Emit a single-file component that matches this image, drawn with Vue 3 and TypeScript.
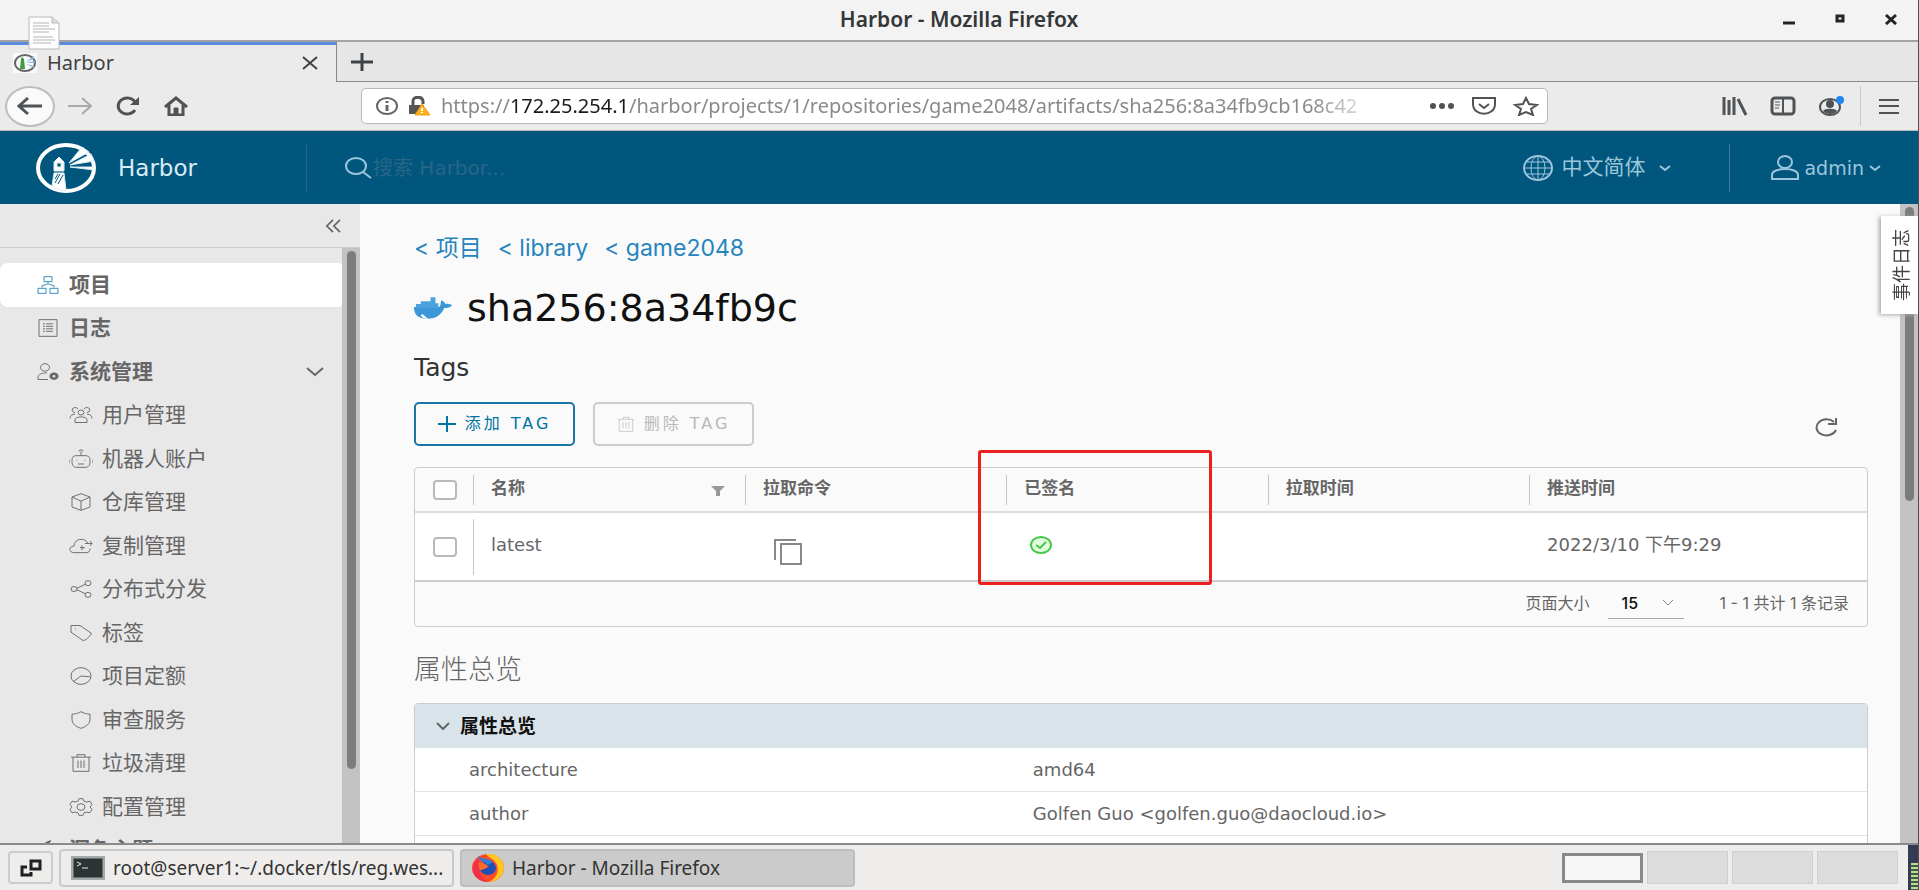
<script setup lang="ts">
import { ref } from 'vue'

interface MenuItem {
  label: string
  icon: string
}

const topMenu: MenuItem[] = [
  { label: '项目', icon: 'M8 2h8v6H8zM2 16h8v6H2zM14 16h8v6h-8zM12 8v4M6 15v-2l5-2M18 15v-2l-5-2' },
  { label: '日志', icon: 'M3 2h18v20H3zM7 7h2M10 7h7M7 10h2M10 10h7M7 13h2M10 13h7M7 16h2M10 16h7' },
]

const adminMenu: MenuItem[] = [
  { label: '用户管理', icon: 'M12 12a3 3 0 1 0 0-6 3 3 0 0 0 0 6zM6 21v-3c0-5 12-5 12 0v3zM9 5a3 3 0 1 0-3 4M15 5a3 3 0 1 1 3 4M1 16c0-3 2-5 5-5M23 16c0-3-2-5-5-5' },
  { label: '机器人账户', icon: 'M8 8h8c5 0 5 3 5 7s-1 7-5 7H8c-4 0-5-3-5-7s0-7 5-7zM12 8V3M10 3a2 2 0 1 1 4 0M8 13v1M16 13v1M9 18h6M0 13v4M24 13v4' },
  { label: '仓库管理', icon: 'M12 2l9 4v12l-9 4-9-4V6zM3 6l9 5 9-5M12 11v11' },
  { label: '复制管理', icon: 'M21 15c0 3-1 5-4 5H5c-5 0-6-7 0-8 0-9 11-11 14-3M11 14h5M13 11v6M16 9h7M21 6l2 3-2 3' },
  { label: '分布式分发', icon: 'M5 15a3 3 0 1 0 0-6 3 3 0 0 0 0 6zM19 8a3 3 0 1 0 0-6 3 3 0 0 0 0 6zM19 22a3 3 0 1 0 0-6 3 3 0 0 0 0 6zM8 11l9-5M8 13l9 5' },
  { label: '标签', icon: 'M2 3v8l12 10 3-1 5-6v-2L11 3zM6 7h1' },
  { label: '项目定额', icon: 'M12 22a10 10 0 1 0 0-20 10 10 0 0 0 0 20zM4 19l8-7 9 1' },
  { label: '审查服务', icon: 'M12 2c3 2 6 3 9 3v6c0 6-4 9-9 11-5-2-9-5-9-11V5c3 0 6-1 9-3z' },
  { label: '垃圾清理', icon: 'M2 5h20M4 5v17h16V5M8 5V2h8v3M9 9v9M12 9v9M15 9v9' },
  { label: '配置管理', icon: 'M10 2h4l1 3 3 1 3-1 2 4-2 3 2 3-2 4-3-1-3 1-1 3h-4l-1-3-3-1-3 1-2-4 2-3-2-3 2-4 3 1 3-1zM12 16a4 4 0 1 0 0-8 4 4 0 0 0 0 8z' },
]

const crumbs = ['项目', 'library', 'game2048']

const overview = [
  { name: 'architecture', value: 'amd64' },
  { name: 'author', value: 'Golfen Guo <golfen.guo@daocloud.io>' },
]

const search = ref('')
const pageSize = ref('15')
const allChecked = ref(false)
const rowChecked = ref(false)
const overviewOpen = ref(true)
</script>

<template>
  <div class="screen">
    <header class="titlebar">
      <span class="window-title">Harbor - Mozilla Firefox</span>
      <div class="window-buttons">
        <button aria-label="Minimize"><svg viewBox="0 0 14 12"><path d="M1 10h12" stroke-width="3" /></svg></button>
        <button aria-label="Maximize"><svg viewBox="0 0 14 12"><path d="M4 3h6v5H4z" stroke-width="3" /></svg></button>
        <button aria-label="Close"><svg viewBox="0 0 14 12"><path d="M2 2l10 9M12 2L2 11" stroke-width="3" /></svg></button>
      </div>
      <svg class="desktop-file" viewBox="0 0 32 34" aria-hidden="true">
        <path d="M1 1h23l7 6v26H1z" fill="#fdfdfd" stroke="#bbb" />
        <path d="M24 1v6h7" fill="#ddd" stroke="#bbb" />
        <path d="M5 7h16M5 10h16M5 13h22M5 16h16M5 21h20M5 24h22M5 27h18" stroke="#b5b5b5" />
      </svg>
    </header>

    <div class="tabstrip">
      <div class="tab">
        <svg class="favicon" viewBox="0 0 24 20" aria-hidden="true">
          <path d="M0 0h24v20H0z" fill="#fafafa" />
          <ellipse cx="12" cy="10" rx="10" ry="8" fill="none" stroke="#666" stroke-width="2" />
          <path d="M9 4l2 2 1 10H7l1-10z" fill="#3f9b3f" />
          <path d="M13 9l8-6v3zM13 10l9-2v2zM13 11l8 2v2z" fill="#7fb4dd" />
        </svg>
        <span class="tab-title">Harbor</span>
        <button class="tab-close" aria-label="Close tab"><svg viewBox="0 0 18 14"><path d="M2 1l14 12M16 1L2 13" stroke-width="2" /></svg></button>
      </div>
      <button class="new-tab" aria-label="New tab"><svg viewBox="0 0 22 18"><path d="M0 9h22M11 0v18" stroke-width="3" /></svg></button>
    </div>

    <div class="toolbar">
      <div class="nav-buttons">
        <button class="back" aria-label="Back"><svg viewBox="0 0 26 20"><path d="M25 10H3M11 2l-9 8 9 8" stroke-width="3" /></svg></button>
        <button class="forward" aria-label="Forward"><svg viewBox="0 0 26 20"><path d="M1 10h22M15 2l9 8-9 8" stroke-width="2" /></svg></button>
        <button aria-label="Reload"><svg viewBox="0 0 26 20"><path d="M20 14a9 8 0 1 1 0-8" stroke-width="3" /><path d="M24 1v8h-9z" fill="currentColor" stroke="none" /></svg></button>
        <button aria-label="Home"><svg viewBox="0 0 26 20"><path d="M2 11L13 2l11 9M6 9v10h14V9" stroke-width="3" /><path d="M11 12h4v7h-4z" fill="currentColor" /></svg></button>
      </div>
      <div class="urlbar">
        <svg class="url-icon" viewBox="0 0 24 20"><ellipse cx="12" cy="10" rx="10" ry="8" stroke-width="2" /><path d="M12 9v6M12 5v2" stroke-width="3" /></svg>
        <svg class="url-icon lock" viewBox="0 0 24 20"><path d="M6 9V5c0-5 9-5 10 0v3" stroke-width="3" /><path d="M2 9h15v9H2z" fill="currentColor" stroke="none" /><path d="M15 8l8 11H8z" fill="#ffb01f" stroke="#f0a010" /><path d="M15 12v3M15 16v1" stroke="#fff" stroke-width="2" /></svg>
        <div class="url-text" role="textbox" aria-label="Address">https://<b>172.25.254.1</b>/harbor/projects/1/repositories/game2048/artifacts/sha256:8a34fb9cb168c42</div>
        <div class="url-actions">
          <button aria-label="Page actions"><svg viewBox="0 0 26 20"><g fill="currentColor" stroke="none"><circle cx="4" cy="10" r="3" /><circle cx="13" cy="10" r="3" /><circle cx="22" cy="10" r="3" /></g></svg></button>
          <button aria-label="Save to Pocket"><svg viewBox="0 0 26 20"><path d="M2 2h22v6c0 13-22 13-22 0zM8 8l5 4 5-4" stroke-width="2" /></svg></button>
          <button aria-label="Bookmark"><svg viewBox="0 0 26 20"><path d="M13 2l3 6 8 1-6 4 2 6-7-3-7 3 2-6-6-4 8-1z" stroke-width="2" /></svg></button>
        </div>
      </div>
      <div class="tool-buttons">
        <button aria-label="Library"><svg viewBox="0 0 26 20"><path d="M2 1v18M7 4v15M12 1v18M16 3l8 16" stroke-width="3" /></svg></button>
        <button aria-label="Sidebars"><svg viewBox="0 0 26 20"><rect x="2" y="2" width="22" height="16" rx="3" stroke-width="3" /><path d="M13 2v16" stroke-width="2" /><path d="M5 6h5M5 9h5M5 12h4" /></svg></button>
        <button aria-label="Account"><svg viewBox="0 0 26 20"><ellipse cx="12" cy="11" rx="10" ry="8" stroke-width="2" /><ellipse cx="12" cy="8" rx="4" ry="4" fill="currentColor" stroke="none" /><path d="M5 15c1-3 13-3 14 0-3 4-11 4-14 0z" fill="currentColor" stroke="none" /><circle cx="22" cy="4" r="4" fill="#2187f0" stroke="none" /></svg></button>
        <button class="menu-button" aria-label="Open menu"><svg viewBox="0 0 26 20"><path d="M3 4h20M3 10h20M3 17h20" stroke-width="2" /></svg></button>
      </div>
    </div>

    <div class="harbor-header">
      <a class="brand" href="#">
        <svg class="logo" viewBox="0 0 60 50" aria-hidden="true">
          <ellipse cx="30" cy="25" rx="28" ry="23" fill="none" stroke="#fff" stroke-width="4" />
          <path d="M33 20L46 4l7 5zM34 22l21-11 3 7zM34 24h24v3z" fill="#fff" />
          <path d="M18 19l5-5 5 5v9H18z" fill="#fff" />
          <path d="M21 20h4v4h-4z" fill="#00567d" />
          <path d="M18 30h10l2 17c-6 1-11-1-14-4z" fill="#fff" />
          <path d="M19 40l5-9M22 41l5-9M19 36l3-5" stroke="#00567d" />
        </svg>
        <span>Harbor</span>
      </a>
      <label class="search">
        <svg viewBox="0 0 30 24" aria-hidden="true"><ellipse cx="13" cy="10" rx="10" ry="8" stroke-width="2" /><path d="M20 16l8 6" stroke-width="2" /></svg>
        <input v-model="search" type="text" placeholder="搜索 Harbor..." aria-label="搜索" />
      </label>
      <button class="language">
        <svg class="globe" viewBox="0 0 30 26"><ellipse cx="15" cy="13" rx="14" ry="12" stroke-width="2" /><ellipse cx="15" cy="13" rx="7" ry="12" /><path d="M15 1v24M1 13h28M4 7h22M4 19h22" /></svg>
        <span>中文简体</span>
        <svg class="caret" viewBox="0 0 12 8"><path d="M1 2l5 4 5-4" stroke-width="2" /></svg>
      </button>
      <button class="account">
        <svg class="person" viewBox="0 0 30 26"><ellipse cx="15" cy="7" rx="7" ry="6" stroke-width="2" /><path d="M2 24v-4c0-8 26-8 26 0v4z" stroke-width="2" /></svg>
        <span>admin</span>
        <svg class="caret" viewBox="0 0 12 8"><path d="M1 2l5 4 5-4" stroke-width="2" /></svg>
      </button>
    </div>

    <div class="body">
      <aside class="sidebar">
        <div class="collapse">
          <button aria-label="收起"><svg viewBox="0 0 18 16"><path d="M9 1L2 8l7 7M17 1l-7 7 7 7" stroke-width="2" /></svg></button>
        </div>
        <div class="side-scroll">
          <nav>
            <a v-for="(item, i) in topMenu" :key="item.label" href="#" class="item top" :class="{ active: i === 0 }">
              <svg viewBox="0 0 24 24" preserveAspectRatio="none"><path :d="item.icon" /></svg><span>{{ item.label }}</span>
            </a>
            <button class="item top group">
              <svg viewBox="0 0 24 24" preserveAspectRatio="none"><path d="M9 11a4 4 0 1 0 0-9 4 4 0 0 0 0 9zM12 21H2v-3c0-3 4-5 9-5" /><path d="M18 20a3 3 0 1 0 0-6 3 3 0 0 0 0 6z" stroke-width="3" /></svg>
              <span>系统管理</span>
              <svg class="group-caret" viewBox="0 0 18 10"><path d="M1 1l8 7 8-7" stroke-width="2" /></svg>
            </button>
            <a v-for="item in adminMenu" :key="item.label" href="#" class="item sub">
              <svg viewBox="0 0 24 24" preserveAspectRatio="none"><path :d="item.icon" /></svg><span>{{ item.label }}</span>
            </a>
            <button class="item top">
              <svg viewBox="0 0 24 24" preserveAspectRatio="none"><path d="M15 1C4 3 2 17 12 21c4 1 7 0 10-3-9 1-14-10-7-17z" fill="currentColor" /></svg><span>深色主题</span>
            </button>
          </nav>
          <div class="rail"><div class="thumb side-thumb"></div></div>
        </div>
      </aside>

      <main>
        <div class="crumbs">
          <a v-for="c in crumbs" :key="c" href="#">&lt; {{ c }}</a>
        </div>
        <h1>
          <svg viewBox="0 0 40 24" aria-hidden="true">
            <path d="M0 11h26c2-2 1-5 2-7 3 1 4 3 4 4 2-1 5 0 7 1-2 3-5 3-8 3-4 9-11 11-17 11C4 23 0 19 0 11z" fill="#3c97d8" />
            <path d="M2 8h5v4H2zM7 5h11v7H7zM17 1h5v11h-5zM22 7h3v5h-3z" fill="#4ba2df" />
            <path d="M8 21c-2-2-1-3 2-2 1 2 3 3 5 4-3 0-5 0-7-2z" fill="#fff" />
          </svg>
          sha256:8a34fb9c
        </h1>
        <h2>Tags</h2>
        <div class="actions">
          <button class="btn">
            <svg viewBox="0 0 18 16"><path d="M0 8h18M9 0v16" stroke-width="2" /></svg>添加 TAG
          </button>
          <button class="btn" disabled>
            <svg viewBox="0 0 24 24" preserveAspectRatio="none"><path d="M1 5h22M3 5v18h18V5M8 5V2h8v3M8 9v10M12 9v10M16 9v10" /></svg>删除 TAG
          </button>
          <button class="refresh" aria-label="刷新"><svg viewBox="0 0 24 20"><path d="M22 13A10 8 0 1 1 20 5M22 1v6h-8" stroke-width="2" /></svg></button>
        </div>

        <section class="datagrid">
          <table>
            <colgroup>
              <col class="c-check" />
              <col class="c-name" />
              <col class="c-col" />
              <col class="c-col" />
              <col class="c-col" />
              <col />
            </colgroup>
            <thead>
              <tr>
                <th><input v-model="allChecked" type="checkbox" aria-label="全选" /></th>
                <th>
                  <div class="cell">名称<button class="filter" aria-label="筛选"><svg viewBox="0 0 14 12"><path d="M0 1h14L9 6v5H5V6z" fill="currentColor" stroke="none" /></svg></button></div>
                </th>
                <th><div class="cell">拉取命令</div></th>
                <th class="signed"><div class="cell">已签名</div><span class="highlight"></span></th>
                <th><div class="cell">拉取时间</div></th>
                <th><div class="cell">推送时间</div></th>
              </tr>
            </thead>
            <tbody>
              <tr>
                <td><input v-model="rowChecked" type="checkbox" aria-label="latest" /></td>
                <td><div class="cell tall">latest</div></td>
                <td>
                  <div class="cell plain icon-copy"><button aria-label="复制"><svg viewBox="0 0 28 28"><path d="M1 22V2h21M7 6h20v20H7z" stroke-width="2" /></svg></button></div>
                </td>
                <td>
                  <div class="cell plain icon-ok"><svg viewBox="0 0 22 18" role="img" aria-label="已签名"><ellipse cx="11" cy="9" rx="10" ry="8" fill="#e2fbdf" stroke="#45c748" stroke-width="2" /><path d="M6 9l4 3 6-6" stroke="#45c748" stroke-width="2" /></svg></div>
                </td>
                <td></td>
                <td><div class="cell plain">2022/3/10 下午9:29</div></td>
              </tr>
            </tbody>
          </table>
          <footer>
            <label for="page-size">页面大小</label>
            <div class="select">
              <select id="page-size" v-model="pageSize">
                <option>15</option>
                <option>25</option>
                <option>50</option>
              </select>
              <svg viewBox="0 0 12 8"><path d="M1 1l5 5 5-5" /></svg>
            </div>
            <span>1 - 1 共计 1 条记录</span>
          </footer>
        </section>

        <h3>属性总览</h3>
        <section class="overview">
          <button class="overview-head" :aria-expanded="overviewOpen" @click="overviewOpen = !overviewOpen">
            <svg viewBox="0 0 14 10"><path d="M1 2l6 6 6-6" stroke-width="2" /></svg>属性总览
          </button>
          <dl v-if="overviewOpen">
            <div v-for="row in overview" :key="row.name">
              <dt>{{ row.name }}</dt>
              <dd>{{ row.value }}</dd>
            </div>
            <div></div>
          </dl>
        </section>
      </main>
      <div class="rail page-rail"><div class="thumb page-thumb"></div></div>
      <button class="event-log"><span>事件日志</span></button>
    </div>

    <footer class="taskbar">
      <button class="show-desktop" aria-label="Show desktop"><svg viewBox="0 0 22 18"><path d="M11 2h9v8h-9zM7 8H2v8h9v-3" stroke-width="3" /></svg></button>
      <button class="task">
        <svg class="terminal" viewBox="0 0 34 24"><path d="M1 1h32v22H1z" fill="#2c3434" stroke="#a5a9a9" stroke-width="3" /><path d="M6 6l4 2-4 2M11 12h6" stroke="#e8e8e8" /></svg>
        root@server1:~/.docker/tls/reg.wes...
      </button>
      <button class="task current">
        <svg class="firefox" viewBox="0 0 32 28">
          <ellipse cx="16" cy="14" rx="16" ry="14" fill="#ff4a2c" />
          <path d="M14 0c10-2 18 6 18 14S24 28 16 28c9-3 12-12 8-19-3-5-7-5-10-9z" fill="#ffc81e" />
          <path d="M6 4C2 8-1 15 2 20c3 5 8 8 14 8C8 24 6 16 9 10z" fill="#f0304a" />
          <ellipse cx="16" cy="14" rx="8" ry="7" fill="#1f4fb4" />
          <path d="M6 2c2 3 12 2 15 6l-5 3c-3-3-10-4-10-9z" fill="#2f7fd8" />
          <path d="M6 9c5-1 8 1 11 4-3 0-4 3-9 3z" fill="#ff6a26" />
        </svg>
        Harbor - Mozilla Firefox
      </button>
      <div class="pager">
        <button class="on" aria-label="Workspace 1"></button>
        <button aria-label="Workspace 2"></button>
        <button aria-label="Workspace 3"></button>
        <button aria-label="Workspace 4"></button>
      </div>
      <div class="tray"><span></span></div>
    </footer>
  </div>
</template>

<style>
body {
  margin: 0;
  overflow: hidden;
}
</style>

<style scoped>
* {
  box-sizing: border-box;
}
.screen {
  height: 100vh;
  display: flex;
  flex-direction: column;
  font-family: "DejaVu Sans", "Noto Sans CJK SC", sans-serif;
  color: #666;
  border-right: 1px solid #4a4f52;
  overflow: hidden;
}
button {
  font: inherit;
  color: inherit;
  background: none;
  border: 0;
  padding: 0;
  display: flex;
  align-items: center;
}
a {
  color: inherit;
  text-decoration: none;
}
svg {
  fill: none;
  stroke: currentColor;
  flex: none;
  display: block;
}

.titlebar {
  position: relative;
  height: 42px;
  flex: none;
  display: flex;
  justify-content: center;
  background: #f3f3f3;
  border-bottom: 2px solid #a3a3a3;
  font: 600 21px "Noto Sans", sans-serif;
  color: #333738;
}
.window-title {
  line-height: 38px;
}
.window-buttons {
  position: absolute;
  right: 20px;
  top: 13px;
  display: flex;
  gap: 37px;
  color: #1f2324;
}
.window-buttons svg {
  width: 14px;
  height: 12px;
}
.desktop-file {
  position: absolute;
  z-index: 2;
  left: 28px;
  top: 16px;
  width: 32px;
  height: 34px;
}
.tabstrip {
  height: 40px;
  flex: none;
  display: flex;
  background: #e6e6e6;
  font: 20px "Noto Sans", sans-serif;
  color: #3f4244;
}
.tab {
  width: 337px;
  display: flex;
  align-items: center;
  padding: 0 17px 2px 13px;
  background: #ebebeb;
  border-top: 3px solid #5a8cdb;
  border-right: 1px solid #888;
}
.favicon {
  width: 24px;
  height: 20px;
  stroke: none;
  margin-right: 10px;
}
.tab-title {
  flex: 1;
}
.tab-close svg {
  width: 18px;
  height: 14px;
}
.new-tab {
  flex: 1;
  padding-left: 14px;
  border-bottom: 1px solid #888;
}
.new-tab svg {
  width: 22px;
  height: 18px;
}
.toolbar {
  height: 49px;
  flex: none;
  display: flex;
  align-items: center;
  background: #ebebeb;
  border-bottom: 1px solid #bbb;
  color: #505355;
}
.nav-buttons {
  width: 361px;
  display: flex;
  align-items: center;
  gap: 22px;
  padding-left: 5px;
}
.toolbar button svg {
  width: 26px;
  height: 20px;
}
.toolbar .back {
  width: 50px;
  height: 41px;
  justify-content: center;
  border: 2px solid #bdbdbd;
  border-radius: 50%;
  background: #fafafa;
}
.toolbar .forward {
  margin-left: -10px;
  color: #a9a9a9;
}
.urlbar {
  flex: 1;
  min-width: 0;
  height: 36px;
  display: flex;
  align-items: center;
  background: #fff;
  border: 1px solid #b9b9b9;
  border-radius: 5px;
  padding: 0 8px 0 13px;
}
.url-icon {
  width: 24px;
  height: 20px;
  margin-right: 8px;
  color: #666;
}
.lock {
  margin-right: 10px;
  color: #555;
}
.url-text {
  flex: 1;
  min-width: 0;
  overflow: hidden;
  white-space: nowrap;
  font: 20px/28px "Noto Sans", sans-serif;
  color: #8a8a8a;
  mask-image: linear-gradient(to right, #000 870px, transparent 940px);
}
.url-text b {
  font-weight: 400;
  color: #1a1a1a;
}
.url-actions {
  display: flex;
  gap: 16px;
}
.tool-buttons {
  display: flex;
  align-items: center;
  gap: 22px;
  padding-left: 174px;
  padding-right: 16px;
}
.menu-button {
  height: 40px;
  padding-left: 15px;
  border-left: 1px solid #c8c8c8;
  margin-left: -6px;
}

.harbor-header {
  height: 73px;
  flex: none;
  display: flex;
  align-items: center;
  background: #00567d;
  color: #9cc6dc;
  font-size: 19px;
}
.brand {
  width: 307px;
  height: 48px;
  padding-left: 36px;
  display: flex;
  align-items: center;
  gap: 22px;
  border-right: 1px solid #20698b;
  color: #d9ecf5;
  font-size: 23px;
}
.logo {
  width: 60px;
  height: 50px;
}
.search {
  flex: 1;
  display: flex;
  align-items: center;
  padding-left: 36px;
}
.search svg {
  width: 30px;
  height: 24px;
}
.search input {
  width: 400px;
  font: inherit;
  font-size: 20px;
  color: #d9ecf5;
  background: none;
  border: 0;
  padding: 0;
}
.search input::placeholder {
  color: #296587;
  opacity: 1;
}
.language {
  height: 48px;
  padding-right: 58px;
  border-right: 1px solid #3f7b9b;
  font-size: 21px;
  line-height: 24px;
}
.language span {
  padding-bottom: 2px;
}
.globe,
.person {
  width: 30px;
  height: 26px;
}
.globe {
  margin-right: 8px;
}
.person {
  margin-right: 4px;
}
.caret {
  width: 12px;
  height: 8px;
}
.language .caret {
  margin-left: 14px;
}
.account {
  padding-left: 40px;
  padding-right: 37px;
}
.account .caret {
  margin-left: 5px;
}

.body {
  position: relative;
  flex: 1;
  min-height: 0;
  display: flex;
  background: #fafafa;
}
.sidebar {
  width: 360px;
  flex: none;
  display: flex;
  flex-direction: column;
  background: #e8e8e8;
}
.collapse {
  height: 44px;
  flex: none;
  display: flex;
  justify-content: flex-end;
  align-items: center;
  padding-right: 18px;
  border-bottom: 1px solid #ccc;
}
.collapse svg {
  width: 18px;
  height: 14px;
}
.side-scroll {
  flex: 1;
  min-height: 0;
  display: flex;
}
nav {
  flex: 1;
  padding-top: 15px;
  overflow: hidden;
}
.item {
  width: 100%;
  height: 43px;
  display: flex;
  align-items: center;
  gap: 9px;
  padding: 0 0 1px 36px;
  font-size: 21px;
  line-height: 24px;
}
.item:nth-child(odd) {
  height: 44px;
}
.item svg {
  width: 24px;
  height: 20px;
}
.top {
  font-weight: 700;
}
.item.sub {
  padding-left: 69px;
}
.active {
  background: #fff;
  border-radius: 8px 4px 4px 8px;
}
.active svg {
  color: #2a86b8;
}
.item .group-caret {
  width: 18px;
  height: 10px;
  margin: 0 18px 0 auto;
}
.rail {
  width: 18px;
  flex: none;
  display: flex;
  justify-content: center;
  background: #c3c3c3;
}
.thumb {
  width: 9px;
  margin-top: 3px;
  border-radius: 5px;
  background: #7b7d7d;
}
.side-thumb {
  height: 87%;
}
.page-thumb {
  height: 46%;
}

main {
  flex: 1;
  min-width: 0;
  padding: 27px 32px 0 54px;
  overflow: hidden;
}
.crumbs {
  display: flex;
  gap: 16px;
  font-family: Inter, "Noto Sans CJK SC", sans-serif;
  font-size: 23px;
  line-height: 34px;
  color: #2584bd;
}
h1,
h2,
h3 {
  margin: 0;
  font-weight: 400;
}
h1 {
  display: flex;
  align-items: center;
  gap: 14px;
  margin-top: 19px;
  font-size: 38px;
  line-height: 48px;
  color: #111;
}
h1 svg {
  width: 39px;
  height: 24px;
  stroke: none;
}
h2 {
  margin-top: 21px;
  font-size: 25px;
  line-height: 30px;
  color: #333;
}
.actions {
  display: flex;
  align-items: center;
  gap: 18px;
  margin-top: 19px;
}
.btn {
  width: 161px;
  height: 44px;
  justify-content: center;
  gap: 9px;
  border: 2px solid #1b76a8;
  border-radius: 5px;
  color: #0072a3;
  font-size: 16px;
  line-height: 24px;
  letter-spacing: 3px;
}
.btn svg {
  width: 18px;
  height: 16px;
}
.btn:disabled {
  color: #b9b9b9;
  border-color: #ccc;
}
.refresh {
  margin: 5px 30px 0 auto;
}
.refresh svg {
  width: 24px;
  height: 20px;
}

.datagrid {
  margin-top: 21px;
  border: 1px solid #ccc;
  border-radius: 4px;
}
table {
  width: 100%;
  table-layout: fixed;
  border-collapse: collapse;
}
.c-check {
  width: 58px;
}
.c-name {
  width: 272px;
}
.c-col {
  width: 18%;
}
th,
td {
  padding: 0;
  text-align: left;
  line-height: 24px;
}
th {
  height: 44px;
  font-size: 17px;
  font-weight: 700;
  color: #666;
  border-bottom: 2px solid #ddd;
}
td {
  height: 69px;
  font-size: 18px;
  background: #fff;
  border-bottom: 2px solid #ccc;
}
.cell {
  height: 30px;
  padding: 0 0 3px 17px;
  display: flex;
  align-items: center;
  border-left: 1px solid #c6c6c6;
}
.tall {
  height: 56px;
}
.plain {
  border-color: transparent;
}
.filter {
  margin-left: auto;
  margin-right: 20px;
  margin-top: 6px;
  color: #999;
}
.filter svg {
  width: 14px;
  height: 12px;
}
.icon-copy {
  height: 40px;
  padding: 10px 0 0 28px;
  color: #888;
}
.icon-copy svg {
  width: 28px;
  height: 28px;
}
.icon-ok {
  padding-left: 23px;
}
.icon-ok svg {
  width: 22px;
  height: 18px;
}
input[type='checkbox'] {
  appearance: none;
  display: block;
  width: 24px;
  height: 20px;
  margin: 0 0 0 18px;
  border: 2px solid #b9b9b9;
  border-radius: 4px;
  background: #fff;
}
.signed {
  position: relative;
}
.highlight {
  position: absolute;
  left: -28px;
  top: -18px;
  width: 234px;
  height: 135px;
  border: 3px solid #ed2020;
  border-radius: 3px;
}
.datagrid footer {
  height: 44px;
  display: flex;
  align-items: center;
  justify-content: flex-end;
  padding: 0 18px 2px 0;
  font-family: Inter, "Noto Sans CJK SC", sans-serif;
  font-size: 16px;
  line-height: 24px;
}
.select {
  display: flex;
  align-items: center;
  width: 76px;
  height: 32px;
  margin: 0 36px 0 18px;
  border-bottom: 1px solid #aaa;
}
select {
  appearance: none;
  flex: 1;
  width: 100%;
  height: 100%;
  padding: 0 0 0 14px;
  font: 500 16px Inter, sans-serif;
  color: #111;
  background: none;
  border: 0;
}
.select svg {
  width: 12px;
  height: 8px;
  margin-right: 10px;
  color: #888;
}
h3 {
  margin-top: 24px;
  font-size: 27px;
  line-height: 38px;
  font-weight: 300;
}
.overview {
  margin-top: 14px;
  border: 1px solid #ccc;
  border-radius: 4px;
  background: #fff;
}
.overview-head {
  width: 100%;
  height: 44px;
  gap: 10px;
  padding: 0 0 1px 21px;
  background: #d9e4ea;
  color: #111;
  font-size: 19px;
  line-height: 24px;
  font-weight: 700;
}
.overview-head svg {
  width: 14px;
  height: 10px;
  color: #666;
}
dl {
  margin: 0;
  font-size: 18px;
  line-height: 24px;
}
dl div {
  height: 44px;
  display: flex;
  align-items: center;
  border-bottom: 1px solid #e3e3e3;
}
dt {
  width: 42%;
  padding-left: 54px;
}
dd {
  margin: 0;
  padding-left: 8px;
}
.event-log {
  position: absolute;
  right: 0;
  top: 12px;
  width: 37px;
  height: 98px;
  justify-content: center;
  background: #fff;
  box-shadow: -2px 1px 4px #aaa;
  color: #444;
  font-size: 18px;
}
.event-log span {
  writing-mode: vertical-rl;
  text-orientation: sideways;
  transform: rotate(180deg);
}

.taskbar {
  height: 47px;
  flex: none;
  display: flex;
  align-items: center;
  padding: 0 0 0 8px;
  gap: 6px;
  background: #efedec;
  border-top: 2px solid #8a8a8a;
  font: 19px "Noto Sans", sans-serif;
  color: #333;
}
.show-desktop {
  width: 45px;
  height: 33px;
  justify-content: center;
  border: 2px solid #ccc;
  border-radius: 4px;
  color: #1c2222;
}
.show-desktop svg {
  width: 22px;
  height: 18px;
}
.task {
  width: 395px;
  height: 38px;
  padding-left: 10px;
  gap: 8px;
  border: 2px solid #c9c9c9;
  border-radius: 4px;
  white-space: nowrap;
  overflow: hidden;
}
.current {
  background: #cbcbcb;
  border-color: #bdbdbd;
}
.terminal {
  width: 34px;
  height: 24px;
}
.firefox {
  width: 32px;
  height: 28px;
  stroke: none;
}
.pager {
  margin-left: auto;
  display: flex;
  align-items: center;
  gap: 4px;
}
.pager button {
  width: 81px;
  height: 33px;
  background: #dcdcdc;
  border: 1px solid #d0d0d0;
}
.pager .on {
  height: 30px;
  background: #f6f6f6;
  border: 3px solid #888;
}
.tray {
  align-self: stretch;
  width: 10px;
  margin-left: 4px;
  padding: 18px 0 0 3px;
  background: #343c54;
}
.tray span {
  display: block;
  height: 100%;
  background: repeating-linear-gradient(#c8d88a 0 2px, #3b5a50 2px 4px);
}
</style>
